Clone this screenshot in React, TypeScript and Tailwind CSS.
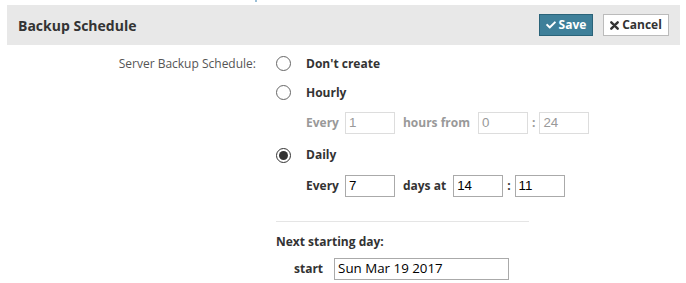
import React from "react";
import { FaCheck } from "react-icons/fa";

function Radio({ checked }: { checked?: boolean }) {
  return checked ? (
    <span className="flex h-[15px] w-[15px] items-center justify-center rounded-full border-[1.5px] border-[#333] bg-white">
      <span className="h-[9px] w-[9px] rounded-full bg-[#333]" />
    </span>
  ) : (
    <span className="h-[15px] w-[15px] rounded-full border border-[#666] bg-white" />
  );
}

function Input({ value, disabled, w = "w-[50px]" }: { value: string; disabled?: boolean; w?: string }) {
  return (
    <div
      className={`${w} flex h-[22px] items-center border px-[3px] text-[13.33px] font-normal ${
        disabled ? "border-[#ddd] text-[#999]" : "border-[#aaa] text-black"
      }`}
      style={{ fontFamily: "'Liberation Sans', Arial, sans-serif" }}
    >
      {value}
    </div>
  );
}

export default function App() {
  return (
    <div className="relative h-[283px] w-[686px] overflow-hidden bg-white text-[12px] text-[#333]" style={{ fontFamily: "'Open Sans', sans-serif" }}>
      <div className="absolute left-[255px] top-0 h-[2px] w-[2px] bg-[#9bbfd6]" />
      <div className="pt-[5px] pl-[7px] pr-[6px]">
        <div className="flex h-[40px] items-center justify-between bg-[#e8e8e8] pl-[11px] pr-[11px]">
          <div className="text-[14px] font-bold text-[#333]">Backup Schedule</div>
          <div className="flex items-center gap-[10px]">
            <button className="flex h-[22px] w-[54px] items-center justify-center gap-[3px] border border-[#2a6379] bg-[#3e7f99] text-[12px] font-bold text-white">
              <FaCheck className="h-[10px] w-[10px]" />
              Save
            </button>
            <button className="flex h-[22px] w-[66px] items-center justify-center gap-[3px] border border-[#bbb] bg-white text-[12px] font-bold text-[#333]">
              <svg width="9" height="9" viewBox="0 0 9 9" className="shrink-0">
                <path d="M1.3 1.3 L7.7 7.7 M7.7 1.3 L1.3 7.7" stroke="#333" strokeWidth="2.4" strokeLinecap="round" />
              </svg>
              Cancel
            </button>
          </div>
        </div>
      </div>
      <div className="mt-[4px] flex">
        <div className="flex h-[29px] w-[256px] items-center justify-end text-[12px] text-[#555]">
          Server Backup Schedule:
        </div>
        <div className="ml-[20px] flex flex-col">
          <div className="flex h-[29px] items-center">
            <Radio />
            <span className="ml-[15px] font-bold">Don't create</span>
          </div>
          <div className="flex h-[29px] items-center">
            <Radio />
            <span className="ml-[15px] font-bold">Hourly</span>
          </div>
          <div className="mt-[5px] flex h-[22px] items-center pl-[30px] font-bold text-[#999]">
            <span>Every</span>
            <div className="ml-[6px]"><Input value="1" disabled /></div>
            <span className="ml-[8px]">hours from</span>
            <div className="ml-[8px]"><Input value="0" disabled /></div>
            <span className="ml-[4px]">:</span>
            <div className="ml-[4px]"><Input value="24" disabled /></div>
          </div>
          <div className="mt-[7px] flex h-[28px] items-center">
            <Radio checked />
            <span className="ml-[15px] font-bold">Daily</span>
          </div>
          <div className="mt-[6px] flex h-[22px] items-center pl-[30px] font-bold text-[#333]">
            <span>Every</span>
            <div className="ml-[6px]"><Input value="7" /></div>
            <span className="ml-[8px]">days at</span>
            <div className="ml-[7px]"><Input value="14" /></div>
            <span className="ml-[4px]">:</span>
            <div className="ml-[4px]"><Input value="11" /></div>
          </div>
          <div className="mt-[24px] h-px w-[253px] bg-[#e5e5e5]" />
          <div className="mt-[11px] flex h-[18px] items-center font-bold">Next starting day:</div>
          <div className="mt-[7px] flex h-[22px] items-center pl-[18px]">
            <span className="font-bold">start</span>
            <div
              className="ml-[11px] flex h-[22px] w-[175px] items-center border border-[#aaa] px-[3px] text-[13.33px] font-normal text-black"
              style={{ fontFamily: "'Open Sans', sans-serif" }}
            >
              Sun Mar 19 2017
            </div>
          </div>
        </div>
      </div>
    </div>
  );
}
